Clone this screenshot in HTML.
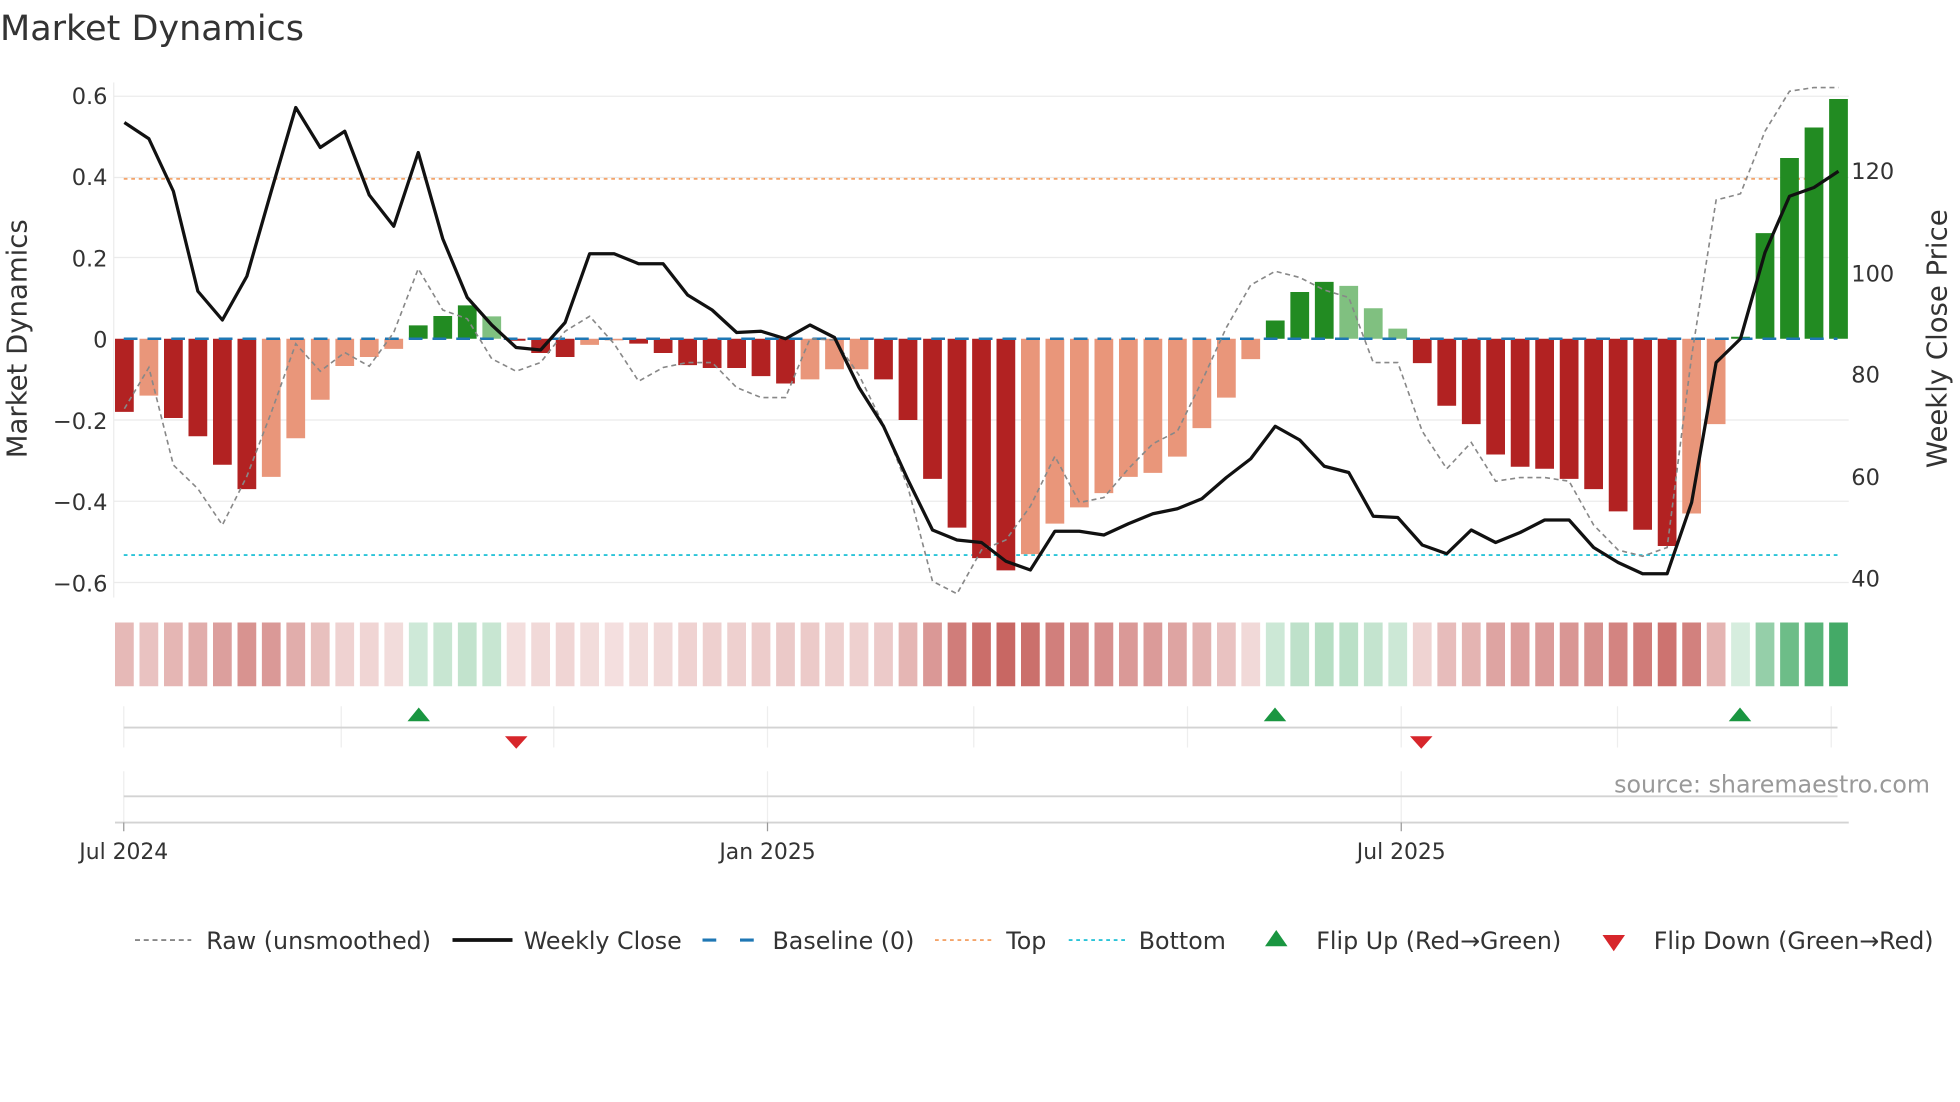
<!DOCTYPE html>
<html><head><meta charset="utf-8"><style>
html,body{margin:0;padding:0;background:#fff;}
svg{display:block;font-family:"DejaVu Sans","Liberation Sans",sans-serif;}
</style></head><body>
<svg width="1960" height="1102" viewBox="0 0 1568 881.6" xmlns="http://www.w3.org/2000/svg">
<rect width="1568" height="882" fill="#fff"/>
<text x="0" y="32" font-size="28" fill="#333">Market Dynamics</text>
<!-- grid -->
<g stroke="#ebebeb" stroke-width="1">
<line x1="91" y1="77" x2="1479" y2="77"/><line x1="91" y1="142" x2="1479" y2="142"/>
<line x1="91" y1="206" x2="1479" y2="206"/><line x1="91" y1="336" x2="1479" y2="336"/>
<line x1="91" y1="401" x2="1479" y2="401"/><line x1="91" y1="466" x2="1479" y2="466"/>
<line x1="91" y1="66" x2="91" y2="478"/>
</g>
<g font-size="18" fill="#333" text-anchor="end">
<text x="86" y="83">0.6</text><text x="86" y="148">0.4</text><text x="86" y="213">0.2</text>
<text x="86" y="278">0</text><text x="86" y="343">−0.2</text><text x="86" y="408">−0.4</text><text x="86" y="473">−0.6</text>
</g>
<g font-size="18" fill="#333">
<text x="1481" y="143">120</text><text x="1481" y="225">100</text><text x="1481" y="306">80</text>
<text x="1481" y="388">60</text><text x="1481" y="469">40</text>
</g>
<text transform="translate(21,271) rotate(-90)" font-size="22" fill="#333" text-anchor="middle">Market Dynamics</text>
<text transform="translate(1557,271) rotate(-90)" font-size="22" fill="#333" text-anchor="middle">Weekly Close Price</text>
<line x1="99" y1="143" x2="1470" y2="143" stroke="#f4a46a" stroke-width="1.5" stroke-dasharray="3,3"/>
<line x1="99" y1="444" x2="1470" y2="444" stroke="#2bc4d8" stroke-width="1.5" stroke-dasharray="3,3"/>
<!-- bars -->
<g>
<rect x="92" y="271" width="15" height="58.5" fill="#b22222"/>
<rect x="111.6" y="271" width="15" height="45.5" fill="#e9967a"/>
<rect x="131.2" y="271" width="15" height="63.4" fill="#b22222"/>
<rect x="150.8" y="271" width="15" height="78" fill="#b22222"/>
<rect x="170.4" y="271" width="15" height="100.8" fill="#b22222"/>
<rect x="190" y="271" width="15" height="120.3" fill="#b22222"/>
<rect x="209.5" y="271" width="15" height="110.5" fill="#e9967a"/>
<rect x="229.1" y="271" width="15" height="79.6" fill="#e9967a"/>
<rect x="248.7" y="271" width="15" height="48.8" fill="#e9967a"/>
<rect x="268.3" y="271" width="15" height="21.8" fill="#e9967a"/>
<rect x="287.9" y="271" width="15" height="14.6" fill="#e9967a"/>
<rect x="307.5" y="271" width="15" height="8.1" fill="#e9967a"/>
<rect x="327.1" y="260.3" width="15" height="10.7" fill="#228b22"/>
<rect x="346.7" y="252.8" width="15" height="18.2" fill="#228b22"/>
<rect x="366.3" y="244.3" width="15" height="26.7" fill="#228b22"/>
<rect x="385.9" y="253.1" width="15" height="17.9" fill="#80c080"/>
<rect x="405.4" y="271" width="15" height="1.6" fill="#b22222"/>
<rect x="425" y="271" width="15" height="11.4" fill="#b22222"/>
<rect x="444.6" y="271" width="15" height="14.6" fill="#b22222"/>
<rect x="464.2" y="271" width="15" height="4.9" fill="#e9967a"/>
<rect x="483.8" y="271" width="15" height="1.3" fill="#e9967a"/>
<rect x="503.4" y="271" width="15" height="3.9" fill="#b22222"/>
<rect x="523" y="271" width="15" height="11.4" fill="#b22222"/>
<rect x="542.6" y="271" width="15" height="21.1" fill="#b22222"/>
<rect x="562.2" y="271" width="15" height="23.4" fill="#b22222"/>
<rect x="581.8" y="271" width="15" height="23.4" fill="#b22222"/>
<rect x="601.3" y="271" width="15" height="29.9" fill="#b22222"/>
<rect x="620.9" y="271" width="15" height="35.8" fill="#b22222"/>
<rect x="640.5" y="271" width="15" height="32.5" fill="#e9967a"/>
<rect x="660.1" y="271" width="15" height="24.4" fill="#e9967a"/>
<rect x="679.7" y="271" width="15" height="24.4" fill="#e9967a"/>
<rect x="699.3" y="271" width="15" height="32.5" fill="#b22222"/>
<rect x="718.9" y="271" width="15" height="65" fill="#b22222"/>
<rect x="738.5" y="271" width="15" height="112.1" fill="#b22222"/>
<rect x="758.1" y="271" width="15" height="151.1" fill="#b22222"/>
<rect x="777.7" y="271" width="15" height="175.5" fill="#b22222"/>
<rect x="797.2" y="271" width="15" height="185.3" fill="#b22222"/>
<rect x="816.8" y="271" width="15" height="172.3" fill="#e9967a"/>
<rect x="836.4" y="271" width="15" height="147.9" fill="#e9967a"/>
<rect x="856" y="271" width="15" height="134.9" fill="#e9967a"/>
<rect x="875.6" y="271" width="15" height="123.5" fill="#e9967a"/>
<rect x="895.2" y="271" width="15" height="110.5" fill="#e9967a"/>
<rect x="914.8" y="271" width="15" height="107.3" fill="#e9967a"/>
<rect x="934.4" y="271" width="15" height="94.3" fill="#e9967a"/>
<rect x="954" y="271" width="15" height="71.5" fill="#e9967a"/>
<rect x="973.6" y="271" width="15" height="47.1" fill="#e9967a"/>
<rect x="993.1" y="271" width="15" height="16.3" fill="#e9967a"/>
<rect x="1012.7" y="256.4" width="15" height="14.6" fill="#228b22"/>
<rect x="1032.3" y="233.6" width="15" height="37.4" fill="#228b22"/>
<rect x="1051.9" y="225.5" width="15" height="45.5" fill="#228b22"/>
<rect x="1071.5" y="228.7" width="15" height="42.3" fill="#80c080"/>
<rect x="1091.1" y="246.6" width="15" height="24.4" fill="#80c080"/>
<rect x="1110.7" y="262.9" width="15" height="8.1" fill="#80c080"/>
<rect x="1130.3" y="271" width="15" height="19.5" fill="#b22222"/>
<rect x="1149.9" y="271" width="15" height="53.6" fill="#b22222"/>
<rect x="1169.5" y="271" width="15" height="68.3" fill="#b22222"/>
<rect x="1189" y="271" width="15" height="92.6" fill="#b22222"/>
<rect x="1208.6" y="271" width="15" height="102.4" fill="#b22222"/>
<rect x="1228.2" y="271" width="15" height="104" fill="#b22222"/>
<rect x="1247.8" y="271" width="15" height="112.1" fill="#b22222"/>
<rect x="1267.4" y="271" width="15" height="120.3" fill="#b22222"/>
<rect x="1287" y="271" width="15" height="138.1" fill="#b22222"/>
<rect x="1306.6" y="271" width="15" height="152.8" fill="#b22222"/>
<rect x="1326.2" y="271" width="15" height="165.8" fill="#b22222"/>
<rect x="1345.8" y="271" width="15" height="139.8" fill="#e9967a"/>
<rect x="1365.4" y="271" width="15" height="68.3" fill="#e9967a"/>
<rect x="1384.9" y="269.4" width="15" height="1.6" fill="#228b22"/>
<rect x="1404.5" y="186.5" width="15" height="84.5" fill="#228b22"/>
<rect x="1424.1" y="126.4" width="15" height="144.6" fill="#228b22"/>
<rect x="1443.7" y="102" width="15" height="169" fill="#228b22"/>
<rect x="1463.3" y="79.2" width="15" height="191.8" fill="#228b22"/>
</g>
<line x1="99" y1="271" x2="1470" y2="271" stroke="#1f77b4" stroke-width="2" stroke-dasharray="11,8"/>
<polyline fill="none" stroke="#888" stroke-width="1.3" stroke-dasharray="4,3" points="99.5,327 119.1,294 138.7,372 158.3,391 177.9,420 197.5,381 217,330 236.6,275 256.2,297 275.8,282 295.4,293 315,266 334.6,215 354.2,248 373.8,255 393.4,287 412.9,297 432.5,290 452.1,265 471.7,253 491.3,275 510.9,305 530.5,294 550.1,290 569.7,290 589.3,310 608.8,318 628.4,318 648,271 667.6,272 687.2,300 706.8,340 726.4,390 746,465 765.6,475 785.2,440 804.7,432 824.3,405 843.9,365 863.5,402 883.1,398 902.7,375 922.3,355 941.9,345 961.5,305 981.1,262 1000.6,228 1020.2,217 1039.8,222 1059.4,232 1079,238 1098.6,290 1118.2,290 1137.8,345 1157.4,375 1177,354 1196.5,385 1216.1,382 1235.7,382 1255.3,385 1274.9,420 1294.5,440 1314.1,445 1333.7,438 1353.3,285 1372.9,160 1392.4,155 1412,105 1431.6,73 1451.2,70 1470.8,70"/>
<polyline fill="none" stroke="#111" stroke-width="2.6" stroke-linejoin="round" points="99.5,98 119.1,111 138.7,153 158.3,233 177.9,256 197.5,221 217,153 236.6,86 256.2,118 275.8,105 295.4,156 315,181 334.6,122 354.2,191 373.8,238 393.4,260 412.9,278 432.5,280 452.1,258 471.7,203 491.3,203 510.9,211 530.5,211 550.1,236 569.7,248 589.3,266 608.8,265 628.4,271 648,260 667.6,270 687.2,310 706.8,341 726.4,384 746,424 765.6,432 785.2,434 804.7,449 824.3,456 843.9,425 863.5,425 883.1,428 902.7,419 922.3,411 941.9,407 961.5,399 981.1,382 1000.6,367 1020.2,341 1039.8,352 1059.4,373 1079,378 1098.6,413 1118.2,414 1137.8,436 1157.4,443 1177,424 1196.5,434 1216.1,426 1235.7,416 1255.3,416 1274.9,438 1294.5,450 1314.1,459 1333.7,459 1353.3,402 1372.9,290 1392.4,271 1412,202 1431.6,157 1451.2,150 1470.8,137"/>
<!-- heatmap -->
<g>
<rect x="92" y="498" width="15" height="51" fill="#c0504c" fill-opacity="0.4"/>
<rect x="111.6" y="498" width="15" height="51" fill="#c0504c" fill-opacity="0.35"/>
<rect x="131.2" y="498" width="15" height="51" fill="#c0504c" fill-opacity="0.42"/>
<rect x="150.8" y="498" width="15" height="51" fill="#c0504c" fill-opacity="0.47"/>
<rect x="170.4" y="498" width="15" height="51" fill="#c0504c" fill-opacity="0.55"/>
<rect x="190" y="498" width="15" height="51" fill="#c0504c" fill-opacity="0.62"/>
<rect x="209.5" y="498" width="15" height="51" fill="#c0504c" fill-opacity="0.58"/>
<rect x="229.1" y="498" width="15" height="51" fill="#c0504c" fill-opacity="0.47"/>
<rect x="248.7" y="498" width="15" height="51" fill="#c0504c" fill-opacity="0.36"/>
<rect x="268.3" y="498" width="15" height="51" fill="#c0504c" fill-opacity="0.26"/>
<rect x="287.9" y="498" width="15" height="51" fill="#c0504c" fill-opacity="0.24"/>
<rect x="307.5" y="498" width="15" height="51" fill="#c0504c" fill-opacity="0.2"/>
<rect x="327.1" y="498" width="15" height="51" fill="#34a35a" fill-opacity="0.24"/>
<rect x="346.7" y="498" width="15" height="51" fill="#34a35a" fill-opacity="0.27"/>
<rect x="366.3" y="498" width="15" height="51" fill="#34a35a" fill-opacity="0.3"/>
<rect x="385.9" y="498" width="15" height="51" fill="#34a35a" fill-opacity="0.27"/>
<rect x="405.4" y="498" width="15" height="51" fill="#c0504c" fill-opacity="0.19"/>
<rect x="425" y="498" width="15" height="51" fill="#c0504c" fill-opacity="0.22"/>
<rect x="444.6" y="498" width="15" height="51" fill="#c0504c" fill-opacity="0.24"/>
<rect x="464.2" y="498" width="15" height="51" fill="#c0504c" fill-opacity="0.2"/>
<rect x="483.8" y="498" width="15" height="51" fill="#c0504c" fill-opacity="0.18"/>
<rect x="503.4" y="498" width="15" height="51" fill="#c0504c" fill-opacity="0.2"/>
<rect x="523" y="498" width="15" height="51" fill="#c0504c" fill-opacity="0.22"/>
<rect x="542.6" y="498" width="15" height="51" fill="#c0504c" fill-opacity="0.26"/>
<rect x="562.2" y="498" width="15" height="51" fill="#c0504c" fill-opacity="0.27"/>
<rect x="581.8" y="498" width="15" height="51" fill="#c0504c" fill-opacity="0.27"/>
<rect x="601.3" y="498" width="15" height="51" fill="#c0504c" fill-opacity="0.29"/>
<rect x="620.9" y="498" width="15" height="51" fill="#c0504c" fill-opacity="0.31"/>
<rect x="640.5" y="498" width="15" height="51" fill="#c0504c" fill-opacity="0.3"/>
<rect x="660.1" y="498" width="15" height="51" fill="#c0504c" fill-opacity="0.27"/>
<rect x="679.7" y="498" width="15" height="51" fill="#c0504c" fill-opacity="0.27"/>
<rect x="699.3" y="498" width="15" height="51" fill="#c0504c" fill-opacity="0.3"/>
<rect x="718.9" y="498" width="15" height="51" fill="#c0504c" fill-opacity="0.42"/>
<rect x="738.5" y="498" width="15" height="51" fill="#c0504c" fill-opacity="0.59"/>
<rect x="758.1" y="498" width="15" height="51" fill="#c0504c" fill-opacity="0.74"/>
<rect x="777.7" y="498" width="15" height="51" fill="#c0504c" fill-opacity="0.83"/>
<rect x="797.2" y="498" width="15" height="51" fill="#c0504c" fill-opacity="0.87"/>
<rect x="816.8" y="498" width="15" height="51" fill="#c0504c" fill-opacity="0.82"/>
<rect x="836.4" y="498" width="15" height="51" fill="#c0504c" fill-opacity="0.73"/>
<rect x="856" y="498" width="15" height="51" fill="#c0504c" fill-opacity="0.68"/>
<rect x="875.6" y="498" width="15" height="51" fill="#c0504c" fill-opacity="0.64"/>
<rect x="895.2" y="498" width="15" height="51" fill="#c0504c" fill-opacity="0.58"/>
<rect x="914.8" y="498" width="15" height="51" fill="#c0504c" fill-opacity="0.57"/>
<rect x="934.4" y="498" width="15" height="51" fill="#c0504c" fill-opacity="0.52"/>
<rect x="954" y="498" width="15" height="51" fill="#c0504c" fill-opacity="0.44"/>
<rect x="973.6" y="498" width="15" height="51" fill="#c0504c" fill-opacity="0.35"/>
<rect x="993.1" y="498" width="15" height="51" fill="#c0504c" fill-opacity="0.22"/>
<rect x="1012.7" y="498" width="15" height="51" fill="#34a35a" fill-opacity="0.25"/>
<rect x="1032.3" y="498" width="15" height="51" fill="#34a35a" fill-opacity="0.32"/>
<rect x="1051.9" y="498" width="15" height="51" fill="#34a35a" fill-opacity="0.36"/>
<rect x="1071.5" y="498" width="15" height="51" fill="#34a35a" fill-opacity="0.34"/>
<rect x="1091.1" y="498" width="15" height="51" fill="#34a35a" fill-opacity="0.29"/>
<rect x="1110.7" y="498" width="15" height="51" fill="#34a35a" fill-opacity="0.25"/>
<rect x="1130.3" y="498" width="15" height="51" fill="#c0504c" fill-opacity="0.25"/>
<rect x="1149.9" y="498" width="15" height="51" fill="#c0504c" fill-opacity="0.38"/>
<rect x="1169.5" y="498" width="15" height="51" fill="#c0504c" fill-opacity="0.43"/>
<rect x="1189" y="498" width="15" height="51" fill="#c0504c" fill-opacity="0.52"/>
<rect x="1208.6" y="498" width="15" height="51" fill="#c0504c" fill-opacity="0.56"/>
<rect x="1228.2" y="498" width="15" height="51" fill="#c0504c" fill-opacity="0.57"/>
<rect x="1247.8" y="498" width="15" height="51" fill="#c0504c" fill-opacity="0.6"/>
<rect x="1267.4" y="498" width="15" height="51" fill="#c0504c" fill-opacity="0.63"/>
<rect x="1287" y="498" width="15" height="51" fill="#c0504c" fill-opacity="0.7"/>
<rect x="1306.6" y="498" width="15" height="51" fill="#c0504c" fill-opacity="0.75"/>
<rect x="1326.2" y="498" width="15" height="51" fill="#c0504c" fill-opacity="0.8"/>
<rect x="1345.8" y="498" width="15" height="51" fill="#c0504c" fill-opacity="0.72"/>
<rect x="1365.4" y="498" width="15" height="51" fill="#c0504c" fill-opacity="0.43"/>
<rect x="1384.9" y="498" width="15" height="51" fill="#34a35a" fill-opacity="0.2"/>
<rect x="1404.5" y="498" width="15" height="51" fill="#34a35a" fill-opacity="0.52"/>
<rect x="1424.1" y="498" width="15" height="51" fill="#34a35a" fill-opacity="0.72"/>
<rect x="1443.7" y="498" width="15" height="51" fill="#34a35a" fill-opacity="0.82"/>
<rect x="1463.3" y="498" width="15" height="51" fill="#34a35a" fill-opacity="0.92"/>
</g>
<!-- flip timeline -->
<g stroke="#eeeeee" stroke-width="1">
<line x1="99" y1="565" x2="99" y2="598"/><line x1="273" y1="565" x2="273" y2="598"/>
<line x1="443" y1="565" x2="443" y2="598"/><line x1="614" y1="565" x2="614" y2="598"/>
<line x1="779" y1="565" x2="779" y2="598"/><line x1="950" y1="565" x2="950" y2="598"/>
<line x1="1121" y1="565" x2="1121" y2="598"/><line x1="1294" y1="565" x2="1294" y2="598"/>
<line x1="1465" y1="565" x2="1465" y2="598"/>
<line x1="99" y1="617" x2="99" y2="658"/><line x1="614" y1="617" x2="614" y2="658"/>
<line x1="1121" y1="617" x2="1121" y2="658"/>
</g>
<line x1="99" y1="582" x2="1470" y2="582" stroke="#d3d3d3" stroke-width="1.5"/>
<g fill="#1a9641">
<polygon points="335,566 326,577 344,577"/><polygon points="1020,566 1011,577 1029,577"/><polygon points="1392,566 1383,577 1401,577"/>
</g>
<g fill="#d7262b">
<polygon points="404,589 422,589 413,599"/><polygon points="1128,589 1146,589 1137,599"/>
</g>
<line x1="99" y1="637" x2="1470" y2="637" stroke="#d3d3d3" stroke-width="1.5"/>
<text x="1544" y="634" font-size="19" fill="#999" text-anchor="end">source: sharemaestro.com</text>
<line x1="92" y1="658" x2="1479" y2="658" stroke="#d3d3d3" stroke-width="1.5"/>
<g stroke="#999" stroke-width="1"><line x1="99" y1="658" x2="99" y2="665"/><line x1="614" y1="658" x2="614" y2="665"/><line x1="1121" y1="658" x2="1121" y2="665"/></g>
<g font-size="17.5" fill="#333" text-anchor="middle">
<text x="99" y="687">Jul 2024</text><text x="614" y="687">Jan 2025</text><text x="1121" y="687">Jul 2025</text>
</g>
<!-- legend -->
<g font-size="19" fill="#333">
<line x1="108" y1="752" x2="153" y2="752" stroke="#888" stroke-width="1.5" stroke-dasharray="4,3"/>
<text x="165" y="759">Raw (unsmoothed)</text>
<line x1="362" y1="752" x2="410" y2="752" stroke="#111" stroke-width="3"/>
<text x="419" y="759">Weekly Close</text>
<line x1="562" y1="752" x2="608" y2="752" stroke="#1f77b4" stroke-width="2.5" stroke-dasharray="11,19"/>
<text x="618" y="759">Baseline (0)</text>
<line x1="748" y1="752" x2="794" y2="752" stroke="#f4a46a" stroke-width="1.5" stroke-dasharray="3,3"/>
<text x="805" y="759">Top</text>
<line x1="855" y1="752" x2="900" y2="752" stroke="#2bc4d8" stroke-width="1.5" stroke-dasharray="3,3"/>
<text x="911" y="759">Bottom</text>
<polygon points="1021,744 1012,757 1030,757" fill="#1a9641"/>
<text x="1053" y="759">Flip Up (Red→Green)</text>
<polygon points="1282,748 1300,748 1291,761" fill="#d7262b"/>
<text x="1323" y="759">Flip Down (Green→Red)</text>
</g>
</svg>
</body></html>
